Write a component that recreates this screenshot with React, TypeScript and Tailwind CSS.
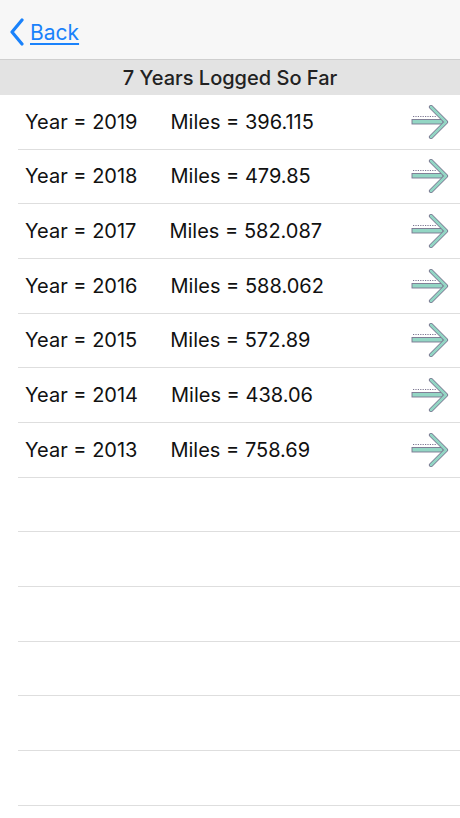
const years = [
  { year: 2019, miles: "396.115" },
  { year: 2018, miles: "479.85" },
  { year: 2017, miles: "582.087" },
  { year: 2016, miles: "588.062" },
  { year: 2015, miles: "572.89" },
  { year: 2014, miles: "438.06" },
  { year: 2013, miles: "758.69" },
]

function Arrow() {
  return (
    <svg width="38" height="34" viewBox="0 0 38 34">
      <rect x="1" y="14.5" width="31" height="4.5" fill="#93d6c4" stroke="#7a7590" strokeWidth="0.9" />
      <line x1="2" y1="11.5" x2="26" y2="11.5" stroke="#7a7590" strokeWidth="1.1" strokeDasharray="1.2 1.2" />
      <path d="M20 2 L35 17 L20 32" fill="none" stroke="#7a7590" strokeWidth="4.2" strokeLinecap="round" strokeLinejoin="round" />
      <path d="M20 2 L35 17 L20 32" fill="none" stroke="#93d6c4" strokeWidth="2.6" strokeLinecap="round" strokeLinejoin="round" />
    </svg>
  )
}

export default function App() {
  return (
    <div className="flex h-[818px] w-[460px] flex-col overflow-hidden bg-white font-['Inter',sans-serif] text-[#111]">
      <div className="flex h-[60px] shrink-0 items-center border-b border-[#cfcfcf] bg-[#f7f7f7] pl-[9px] pt-[5px]">
        <svg width="16" height="28" viewBox="0 0 16 28">
          <path d="M13 2 L3 14 L13 26" fill="none" stroke="#1a82fb" strokeWidth="3.2" strokeLinecap="round" strokeLinejoin="round" />
        </svg>
        <span className="ml-[5px] text-[21px] leading-none text-[#1a82fb] underline decoration-[1.5px] underline-offset-[3px]">
          Back
        </span>
      </div>
      <div className="flex h-[35px] shrink-0 items-center justify-center bg-[#e3e3e3] text-[20px] font-medium text-[#222]">
        7 Years Logged So Far
      </div>
      <div className="flex flex-col">
        {years.map((y) => (
          <div key={y.year} className="ml-[18px] flex h-[54.67px] items-center border-b border-[#dedede] pr-[11px]">
            <span className="ml-[7px] text-[20px]">Year = {y.year}</span>
            <span className="ml-[33px] text-[20px]">Miles = {y.miles}</span>
            <span className="ml-auto">
              <Arrow />
            </span>
          </div>
        ))}
        {Array.from({ length: 6 }).map((_, i) => (
          <div key={i} className="ml-[18px] h-[54.67px] border-b border-[#dedede]" />
        ))}
      </div>
    </div>
  )
}
